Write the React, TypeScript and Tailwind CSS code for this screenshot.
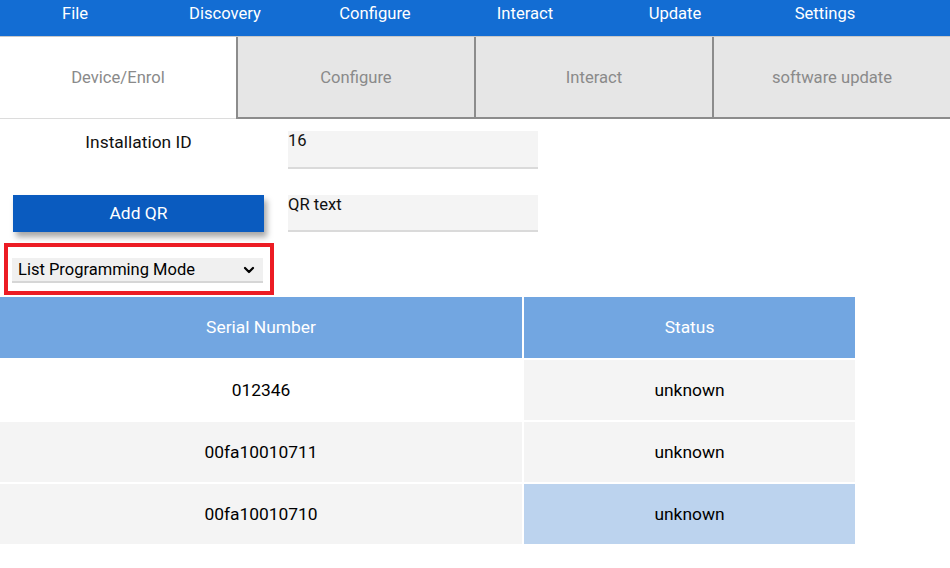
import { ChevronDown } from 'lucide-react';

const menuItems = ['File', 'Discovery', 'Configure', 'Interact', 'Update', 'Settings'];
const tabs = ['Device/Enrol', 'Configure', 'Interact', 'software update'];

const rows = [
  { serial: '012346', status: 'unknown', serialBg: 'bg-white', statusBg: 'bg-[#f4f4f4]' },
  { serial: '00fa10010711', status: 'unknown', serialBg: 'bg-[#f4f4f4]', statusBg: 'bg-[#f4f4f4]' },
  { serial: '00fa10010710', status: 'unknown', serialBg: 'bg-[#f4f4f4]', statusBg: 'bg-[#bcd3ee]' },
];

export default function App() {
  return (
    <div className="w-[950px] h-[568px] bg-white overflow-hidden font-['Roboto',sans-serif] text-[16px]">
      {/* Top menu bar */}
      <div className="flex h-[37px] bg-[#136dd3] border-b border-[#c8c8c8]">
        {menuItems.map((item) => (
          <div key={item} className="w-[150px] pt-[4px] text-center leading-5 text-[16.6px] text-white">
            {item}
          </div>
        ))}
      </div>

      {/* Tabs */}
      <div className="flex h-[82px] text-[16.6px]">
        {tabs.map((tab, i) => (
          <div
            key={tab}
            className={
              i === 0
                ? 'flex-1 flex items-center justify-center pt-[2px] bg-white border-b border-[#dcdcdc] text-[#8a8a8a]'
                : 'flex-1 flex items-center justify-center pt-[2px] bg-[#e6e6e6] border-l-2 border-b-2 border-[#8c8c8c] text-[#8a8a8a]'
            }
          >
            {tab}
          </div>
        ))}
      </div>

      {/* Form */}
      <div className="flex flex-col">
        <div className="flex mt-[12px] items-start">
          <div className="w-[251px] ml-[13px] text-center leading-5 pt-[1px] text-[17.4px] text-[#111]">
            Installation ID
          </div>
          <div className="ml-[24px] w-[250px] h-[38px] bg-[#f4f4f4] border-b-2 border-[#dadada] leading-5 text-[16.6px] text-[#111]">
            16
          </div>
        </div>

        <div className="flex mt-[26px] items-start">
          <button className="w-[251px] ml-[13px] h-[37px] bg-[#0a5bbf] text-white text-[17.4px] shadow-[3px_5px_6px_rgba(0,0,0,0.35)]">
            Add QR
          </button>
          <div className="ml-[24px] w-[250px] h-[37px] bg-[#f4f4f4] border-b-2 border-[#dadada] leading-5 text-[16.6px] text-[#111]">
            QR text
          </div>
        </div>

        <div className="mt-[11px] ml-[4px] w-[270px] h-[52px] border-4 border-[#ec1c24] pt-[11px] pl-[4px]">
          <div className="w-[251px] h-[25px] bg-[#f0f0f0] border-b-2 border-[#d6d6d6] flex items-center justify-between pl-[6px] pr-[6px] text-black">
            <span className="leading-5 text-[16.5px]">List Programming Mode</span>
            <ChevronDown size={16} strokeWidth={3.4} />
          </div>
        </div>

        {/* Table */}
        <div className="mt-[2px] w-[855px] grid grid-cols-[522px_331px] gap-[2px] bg-white text-[17.4px]">
          <div className="h-[61px] bg-[#72a6e1] text-white flex items-center justify-center">Serial Number</div>
          <div className="h-[61px] bg-[#72a6e1] text-white flex items-center justify-center">Status</div>
          {rows.map((row) => (
            <>
              <div key={row.serial + 's'} className={`h-[60px] ${row.serialBg} text-black flex items-center justify-center`}>
                {row.serial}
              </div>
              <div key={row.serial + 't'} className={`h-[60px] ${row.statusBg} text-black flex items-center justify-center`}>
                {row.status}
              </div>
            </>
          ))}
        </div>
      </div>
    </div>
  );
}
